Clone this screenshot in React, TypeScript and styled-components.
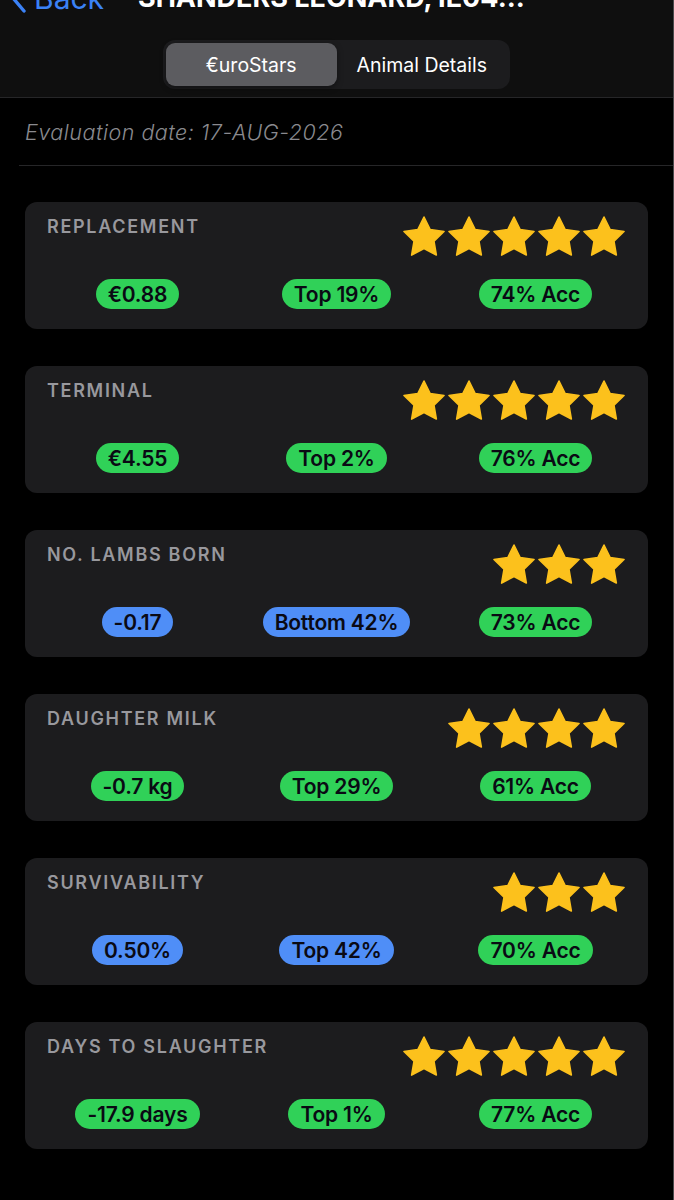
import React from "react";
import styled, { createGlobalStyle } from "styled-components";

const GlobalStyle = createGlobalStyle`
  html, body {
    margin: 0;
    padding: 0;
    background: #000;
  }
  body {
    font-family: Inter, "Noto Sans", "Liberation Sans", sans-serif;
    -webkit-font-smoothing: antialiased;
  }
`;

type Tone = "green" | "blue";

interface Trait {
  name: string;
  stars: number;
  value: string;
  rank: string;
  acc: string;
  tone: Tone;
}

const traits: Trait[] = [
  { name: "REPLACEMENT", stars: 5, value: "€0.88", rank: "Top 19%", acc: "74% Acc", tone: "green" },
  { name: "TERMINAL", stars: 5, value: "€4.55", rank: "Top 2%", acc: "76% Acc", tone: "green" },
  { name: "NO. LAMBS BORN", stars: 3, value: "-0.17", rank: "Bottom 42%", acc: "73% Acc", tone: "blue" },
  { name: "DAUGHTER MILK", stars: 4, value: "-0.7 kg", rank: "Top 29%", acc: "61% Acc", tone: "green" },
  { name: "SURVIVABILITY", stars: 3, value: "0.50%", rank: "Top 42%", acc: "70% Acc", tone: "blue" },
  { name: "DAYS TO SLAUGHTER", stars: 5, value: "-17.9 days", rank: "Top 1%", acc: "77% Acc", tone: "green" },
];

const Page = styled.div`
  width: 674px;
  min-height: 1200px;
  box-sizing: border-box;
  background: #000;
  border-right: 1px solid #4a4a4c;
  overflow: hidden;
`;

const Header = styled.header`
  height: 97px;
  background: #0f0f0f;
  border-bottom: 1px solid #262628;
  display: flex;
  flex-direction: column;
  align-items: center;
`;

// the nav bar is scrolled partly out of view in the screenshot
const NavBar = styled.div`
  align-self: stretch;
  display: flex;
  align-items: center;
  height: 34px;
  margin-top: -19px;
  padding-left: 10px;
`;

const BackButton = styled.span`
  display: flex;
  align-items: center;
  gap: 7px;
  color: #3b82f6;
  font-size: 30px;
  line-height: 34px;
  width: 128px;
`;

const Title = styled.span`
  color: #fff;
  font-size: 27px;
  font-weight: 700;
  line-height: 34px;
  white-space: nowrap;
`;

const Segmented = styled.div`
  margin-top: 25px;
  width: 347px;
  height: 49px;
  box-sizing: border-box;
  padding: 3px;
  border-radius: 12px;
  background: #1c1c1e;
  display: grid;
  grid-template-columns: 1fr 1fr;
`;

const Segment = styled.div<{ $active?: boolean }>`
  display: flex;
  align-items: center;
  justify-content: center;
  border-radius: 9px;
  color: #fff;
  font-size: 19.5px;
  background: ${(p) => (p.$active ? "#5c5c60" : "transparent")};
  box-shadow: ${(p) => (p.$active ? "0 2px 6px rgba(0,0,0,0.4)" : "none")};
`;

const DateRow = styled.div`
  height: 67px;
  margin-left: 19px;
  padding-left: 6px;
  display: flex;
  align-items: center;
  border-bottom: 1px solid #262628;
  color: #8a8a8f;
  font-size: 21.5px;
  font-weight: 300;
  font-style: italic;
  letter-spacing: 0.5px;
`;

const CardList = styled.div`
  padding: 36px 25px 0 25px;
  display: flex;
  flex-direction: column;
  gap: 37px;
`;

const Card = styled.section`
  height: 127px;
  box-sizing: border-box;
  padding: 14px 23px 0 22px;
  border-radius: 12px;
  background: #1c1c1e;
`;

const TopRow = styled.div`
  display: flex;
  justify-content: space-between;
  align-items: flex-start;
`;

const TraitName = styled.h2`
  margin: 0;
  color: #98989d;
  font-size: 18px;
  font-weight: 600;
  line-height: 22px;
  letter-spacing: 1.7px;
`;

const Stars = styled.div`
  display: flex;
  gap: 3px;
  height: 40px;
`;

const PillRow = styled.div`
  margin: 23px -10px 0 -9px;
  display: grid;
  grid-template-columns: repeat(3, 1fr);
  align-items: center;
  justify-items: center;
`;

const Pill = styled.span<{ $tone: Tone }>`
  display: inline-flex;
  align-items: center;
  height: 30px;
  padding: 0 12px;
  border-radius: 15px;
  background: ${(p) => (p.$tone === "green" ? "#30d158" : "#4f8ef7")};
  color: #0a0a14;
  font-size: 21px;
  font-weight: 600;
  letter-spacing: -0.2px;
`;

const Star = () => (
  <svg width="42" height="40" viewBox="1.5 1.5 21 20" aria-hidden="true">
    <path
      d="M12 2l3.09 6.26L22 9.27l-5 4.87 1.18 6.88L12 17.77l-6.18 3.25L7 14.14 2 9.27l6.91-1.01L12 2z"
      fill="#fcc11c"
      stroke="#fcc11c"
      strokeWidth="0.8"
      strokeLinejoin="round"
    />
  </svg>
);

const Chevron = () => (
  <svg width="17" height="30" viewBox="0 0 17 30" aria-hidden="true">
    <path d="M14 2L3 15l11 13" fill="none" stroke="#3b82f6" strokeWidth="3.4" strokeLinecap="round" strokeLinejoin="round" />
  </svg>
);

const TraitCard = ({ t }: { t: Trait }) => (
  <Card>
    <TopRow>
      <TraitName>{t.name}</TraitName>
      <Stars>
        {Array.from({ length: t.stars }).map((_, i) => (
          <Star key={i} />
        ))}
      </Stars>
    </TopRow>
    <PillRow>
      <Pill $tone={t.tone}>{t.value}</Pill>
      <Pill $tone={t.tone}>{t.rank}</Pill>
      <Pill $tone="green">{t.acc}</Pill>
    </PillRow>
  </Card>
);

export default function App() {
  return (
    <>
      <GlobalStyle />
      <Page>
        <Header>
          <NavBar>
            <BackButton>
              <Chevron />
              Back
            </BackButton>
            <Title>SHANDERS LEONARD, IE04...</Title>
          </NavBar>
          <Segmented>
            <Segment $active>€uroStars</Segment>
            <Segment>Animal Details</Segment>
          </Segmented>
        </Header>
        <DateRow>Evaluation date: 17-AUG-2026</DateRow>
        <CardList>
          {traits.map((t) => (
            <TraitCard key={t.name} t={t} />
          ))}
        </CardList>
      </Page>
    </>
  );
}
